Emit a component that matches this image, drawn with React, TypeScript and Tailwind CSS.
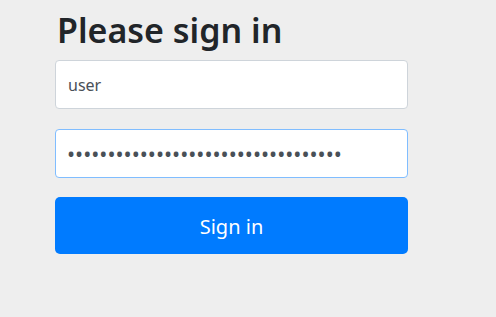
import React from "react";

const App: React.FC = () => {
  return (
    <div className="min-h-[317px] w-full bg-[#eeeeee] font-['Noto_Sans','Open_Sans',sans-serif]">
      <div className="ml-[55px] flex w-[353px] flex-col pt-[8px]">
        <h2 className="mb-[8px] pl-[2px] text-[34px] font-semibold leading-[44px] text-[#212529]">
          Please sign in
        </h2>
        <input
          type="text"
          defaultValue="user"
          className="h-[49px] w-full rounded-[4px] border border-[#ced4da] bg-white px-[12px] text-[16px] text-[#495057] outline-none"
        />
        <input
          type="password"
          defaultValue="**********************************"
          className="mt-[20px] h-[49px] w-full rounded-[4px] border border-[#80bdff] bg-white px-[11px] text-[21.5px] text-[#495057] outline-none"
        />
        <button className="mt-[19px] h-[57px] w-full rounded-[5px] bg-[#007bff] pt-[2px] text-[20px] text-white">
          Sign in
        </button>
      </div>
    </div>
  );
};

export default App;
